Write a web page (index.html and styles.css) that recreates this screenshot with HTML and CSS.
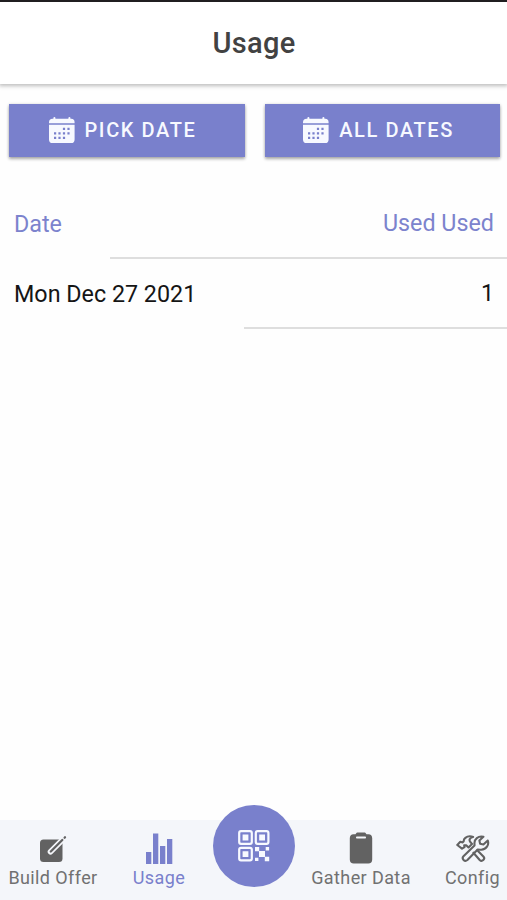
FILE: index.html
```html
<!DOCTYPE html>
<html lang="en">
<head>
<meta charset="utf-8">
<title>Usage</title>
<link rel="stylesheet" href="styles.css">
</head>
<body>
<svg class="defs" width="0" height="0" aria-hidden="true">
  <symbol id="calendar" viewBox="0 0 26 26">
    <path fill="currentColor" d="M0 5.400a3.600 3.600 0 0 1 3.600-3.600h.8V1a1 1 0 0 1 2 0v.8h13V1a1 1 0 0 1 2 0v.8h.8A3.600 3.600 0 0 1 25.600 5.400V6.300H0zM0 7.800h25.600v14.600a3.600 3.600 0 0 1-3.600 3.600H3.600A3.600 3.600 0 0 1 0 22.400z"/>
    <path class="dots" d="M13.900 11.800h2.200m2.300 0h2.200M13.900 16.300h2.200m2.300 0h2.200M5 16.300h2.200m2.200 0h2.200M5 20.800h2.200m2.200 0h2.200m2.300 0h2.200"/>
  </symbol>
</svg>
<div class="app">
  <header class="header"><h1>Usage</h1></header>
  <main class="content">
    <div class="buttons">
      <button class="button"><svg class="calendar"><use href="#calendar"/></svg><span>PICK DATE</span></button>
      <button class="button all"><svg class="calendar"><use href="#calendar"/></svg><span>ALL DATES</span></button>
    </div>
    <div class="row heading"><span class="label">Date</span><span class="value">Used Used</span></div>
    <div class="row entry"><span class="label">Mon Dec 27 2021</span><span class="value">1</span></div>
  </main>
  <nav class="tabs">
    <a class="tab build">
      <svg width="28" height="32" viewBox="0 0 28 32">
        <rect x="1" y="7.500" width="22.500" height="22.500" rx="3.500" fill="currentColor"/>
        <path d="M11.500 19.700 25 6.200" stroke="#f4f6fa" stroke-width="5.600" stroke-linecap="round"/>
        <path d="M11.800 19.500 23.300 8M25.600 5.700l.4-.4" stroke="currentColor" stroke-width="2.300" stroke-linecap="round"/>
      </svg>
      <span>Build Offer</span>
    </a>
    <a class="tab usage">
      <svg width="28" height="32" viewBox="0 0 28 32">
        <path d="M1 20h5.300v12H1zM8 1.500h5.300V32H8zM15 14h5.300v18H15zM22 7h5.300v25H22z" fill="currentColor"/>
      </svg>
      <span>Usage</span>
    </a>
    <a class="scan">
      <svg width="32" height="32" viewBox="0 0 32 32">
        <g fill="none" stroke="currentColor" stroke-width="2.200"><rect x="1.200" y="1.200" width="12.600" height="12.600" rx="1.800"/><rect x="17.800" y="1.200" width="12.600" height="12.600" rx="1.800"/><rect x="1.200" y="17.800" width="12.600" height="12.600" rx="1.800"/></g>
        <path d="M4.600 4.600h5.800v5.800H4.600zM21.200 4.600H27v5.800h-5.800zM4.600 21.200h5.800V27H4.600zM21 21h6v6h-6zM17 17h4.200v4.200H17zM26.800 26.800h4.400v4.400h-4.400zM27.700 17h3.400v3.400h-3.400zM17 27.700h3.400v3.400H17z" fill="currentColor"/>
      </svg>
    </a>
    <a class="tab gather">
      <svg width="24" height="32" viewBox="0 0 24 32">
        <path d="M4.500 2.200h2C7.200.900 8 .500 9 .500h6c1 0 1.800.4 2.500 1.700h2A4 4 0 0 1 23.200 6v21.500a4 4 0 0 1-4 4H4.800a4 4 0 0 1-4-4V6a4 4 0 0 1 3.700-3.800z" fill="currentColor"/>
        <rect x="7" y="4.600" width="10" height="2" rx=".8" fill="#f4f6fa"/>
      </svg>
      <span>Gather Data</span>
    </a>
    <a class="tab config">
      <svg width="34" height="30" viewBox="0 0 34 30" fill="none" stroke="currentColor" stroke-width="2.100" stroke-linejoin="round" stroke-linecap="round">
        <path d="M18.500 11.500 7.500 22.200c-2.300 2.500 1.200 6.100 3.900 3.800l10.300-10.400c1.200.1 2.400.2 3.600.1 5-.3 8-4.700 6.500-9.200l-4.400 4-3.300-.7-.7-3.200 4-3.800c-5-1.300-9.500 2.300-8.900 7.200z"/>
        <path d="M1.300 11 4.300 7.800l2.400.6 1-1.100c-.3-2.500 2.800-5 6-5 1.500 0 2.600.3 3.400.7-3.400.7-4.400 2.800-2.800 5l1.700 1.900-3.500 3.500-2.300-2.200-2 .2.300 1.700-2.500 1.500z"/>
        <path d="m17.400 18.700 6.300 7.300c2.400 2.300 6-1 3.700-3.500l-6.200-6.300"/>
      </svg>
      <span>Config</span>
    </a>
  </nav>
</div>
</body>
</html>
```
FILE: styles.css
```css
* { box-sizing: border-box; }
body { margin: 0; font-family: Roboto, sans-serif; background: #fefefe; }
.defs { display: block; }
.app { width: 507px; height: 900px; display: flex; flex-direction: column; overflow: hidden; }
.header {
  height: 84px;
  border-top: 2px solid #201e20;
  background: #fff;
  box-shadow: 0 1px 4px 1px rgba(0, 0, 0, .26);
  text-align: center;
}
h1 { margin: 0; padding-left: 1px; font-size: 29px; font-weight: 500; line-height: 82px; letter-spacing: .3px; color: #424242; }
.content { flex: 1; }
.buttons { display: flex; gap: 20px; padding: 20px 7px 0 9px; }
.button {
  flex: 1;
  height: 53px;
  border: 0;
  padding: 0 0 1px 39.500px;
  display: flex;
  align-items: center;
  gap: 10px;
  background: #7980cc;
  color: #f7f9ff;
  font: 500 20px Roboto, sans-serif;
  letter-spacing: 1.600px;
  white-space: nowrap;
  box-shadow: 0 2px 3px rgba(0, 0, 0, .32), 0 0 3px rgba(0, 0, 0, .12);
}
.button.all { padding-left: 38px; }
.calendar { width: 26px; height: 26px; }
.dots { fill: none; stroke: #7980cc; stroke-width: 2.200px; }
.row {
  height: 70px;
  display: flex;
  justify-content: space-between;
  padding: 0 13px 0 14px;
  font-size: 23.300px;
  line-height: 70px;
  background: linear-gradient(#dedede, #dedede) no-repeat right bottom;
}
.heading { margin-top: 32px; color: #7c83cd; background-size: 397px 2px; }
.entry { color: #151515; background-size: 263px 2px; }
.value { position: relative; top: -1px; }
.tabs {
  height: 80px;
  display: grid;
  grid-template-columns: 106px 106px 84px 130px 1fr;
  background: #f4f6fa;
  color: #626262;
}
.tab { display: flex; flex-direction: column; align-items: center; padding-top: 12px; font-size: 18px; line-height: 24px; letter-spacing: .4px; white-space: nowrap; }
.tab svg { display: block; }
.tab span { margin-top: 2px; color: #717171; }
.tab.config { padding-left: 12px; }
.config svg { margin: 2px 0 0; }
.tab.usage, .tab.usage span { color: #7980cc; }
.scan {
  width: 82px;
  height: 82px;
  margin: -15px 0 0 1px;
  border-radius: 50%;
  background: #7980cc;
  color: #f7f9ff;
  display: flex;
  align-items: center;
  justify-content: center;
}
```
